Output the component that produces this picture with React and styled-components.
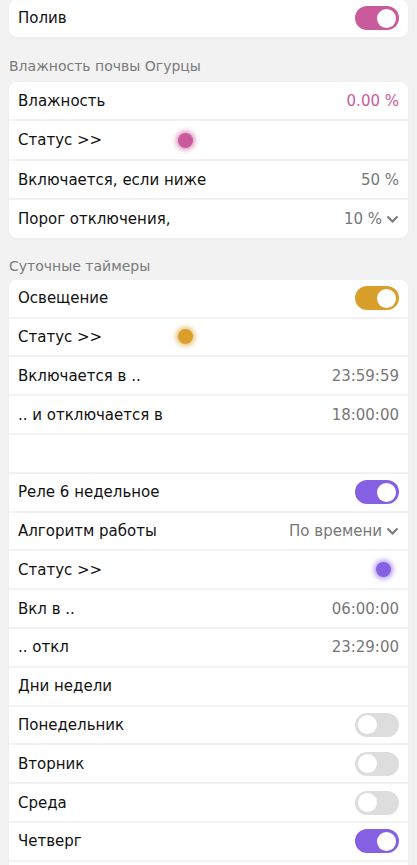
import React from "react";
import styled, { createGlobalStyle } from "styled-components";

const GlobalStyle = createGlobalStyle`
  html, body {
    margin: 0;
    padding: 0;
    background: #f2f2f2;
  }
  body {
    font-family: "DejaVu Sans", Verdana, sans-serif;
    color: #111;
  }
`;

const Page = styled.div`
  display: flex;
  flex-direction: column;
  padding: 0 9px;
`;

const SectionTitle = styled.div`
  font-size: 14px;
  color: #7a7a7a;
  padding: ${(p) => p.$pad || "20px 0 6px 0"};
  line-height: 18px;
`;

// высота строки задаётся переменной карточки
const Card = styled.div`
  --row-h: ${(p) => p.$rowH || "36.8px"};
  display: flex;
  flex-direction: column;
  gap: 2px;
  background: #f2f2f2;
  border-radius: 8px;
  overflow: hidden;
  box-shadow: 0 1px 3px rgba(0, 0, 0, 0.04);
`;

const Row = styled.div`
  display: flex;
  align-items: center;
  height: var(--row-h);
  padding: 0 9px;
  background: #fff;
  font-size: 15px;
`;

const Label = styled.span`
  flex: ${(p) => (p.$fixed ? "0 0 160px" : "1")};
`;

const Value = styled.span`
  margin-left: auto;
  font-size: 15px;
  color: ${(p) => p.$color || "#777"};
  display: flex;
  align-items: center;
  gap: 4px;
`;

const Dot = styled.span`
  width: 15px;
  height: 15px;
  border-radius: 50%;
  background: ${(p) => p.$color};
  box-shadow: 0 0 5px 2px ${(p) => p.$color}aa;
  margin-left: ${(p) => (p.$right ? "auto" : "0")};
  margin-right: ${(p) => (p.$right ? "8px" : "0")};
`;

const Toggle = styled.span`
  margin-left: auto;
  width: 44px;
  height: 24px;
  border-radius: 12px;
  background: ${(p) => (p.$on ? p.$color : "#dddddd")};
  display: flex;
  align-items: center;
  justify-content: ${(p) => (p.$on ? "flex-end" : "flex-start")};
  padding: 0 3px;
  box-sizing: border-box;
`;

const Knob = styled.span`
  width: 19px;
  height: 19px;
  border-radius: 50%;
  background: #fff;
`;

const Chevron = () => (
  <svg width="13" height="8" viewBox="0 0 13 8">
    <path d="M1.5 1.5 L6.5 6.5 L11.5 1.5" fill="none" stroke="#777" strokeWidth="2" />
  </svg>
);

const PINK = "#c95b9c";
const GOLD = "#d99f2b";
const VIOLET = "#8660e2";

const App = () => (
  <>
    <GlobalStyle />
    <Page>
      <Card>
        <Row>
          <Label>Полив</Label>
          <Toggle $on $color={PINK}>
            <Knob />
          </Toggle>
        </Row>
      </Card>

      <SectionTitle $pad="20px 0 7px 0">Влажность почвы Огурцы</SectionTitle>
      <Card $rowH="37.5px">
        <Row>
          <Label>Влажность</Label>
          <Value $color={PINK}>0.00 %</Value>
        </Row>
        <Row>
          <Label $fixed>Статус &gt;&gt;</Label>
          <Dot $color={PINK} />
        </Row>
        <Row>
          <Label>Включается, если ниже</Label>
          <Value>50 %</Value>
        </Row>
        <Row>
          <Label>Порог отключения,</Label>
          <Value>
            10 % <Chevron />
          </Value>
        </Row>
      </Card>

      <SectionTitle $pad="19px 0 5px 0">Суточные таймеры</SectionTitle>
      <Card>
        <Row>
          <Label>Освещение</Label>
          <Toggle $on $color={GOLD}>
            <Knob />
          </Toggle>
        </Row>
        <Row>
          <Label $fixed>Статус &gt;&gt;</Label>
          <Dot $color={GOLD} />
        </Row>
        <Row>
          <Label>Включается в ..</Label>
          <Value>23:59:59</Value>
        </Row>
        <Row>
          <Label>.. и отключается в</Label>
          <Value>18:00:00</Value>
        </Row>
        <Row />
        <Row>
          <Label>Реле 6 недельное</Label>
          <Toggle $on $color={VIOLET}>
            <Knob />
          </Toggle>
        </Row>
        <Row>
          <Label>Алгоритм работы</Label>
          <Value>
            По времени <Chevron />
          </Value>
        </Row>
        <Row>
          <Label>Статус &gt;&gt;</Label>
          <Dot $right $color={VIOLET} />
        </Row>
        <Row>
          <Label>Вкл в ..</Label>
          <Value>06:00:00</Value>
        </Row>
        <Row>
          <Label>.. откл</Label>
          <Value>23:29:00</Value>
        </Row>
        <Row>
          <Label>Дни недели</Label>
        </Row>
        {["Понедельник", "Вторник", "Среда"].map((d) => (
          <Row key={d}>
            <Label>{d}</Label>
            <Toggle>
              <Knob />
            </Toggle>
          </Row>
        ))}
        <Row>
          <Label>Четверг</Label>
          <Toggle $on $color={VIOLET}>
            <Knob />
          </Toggle>
        </Row>
        <Row />
      </Card>
    </Page>
  </>
);

export default App;
